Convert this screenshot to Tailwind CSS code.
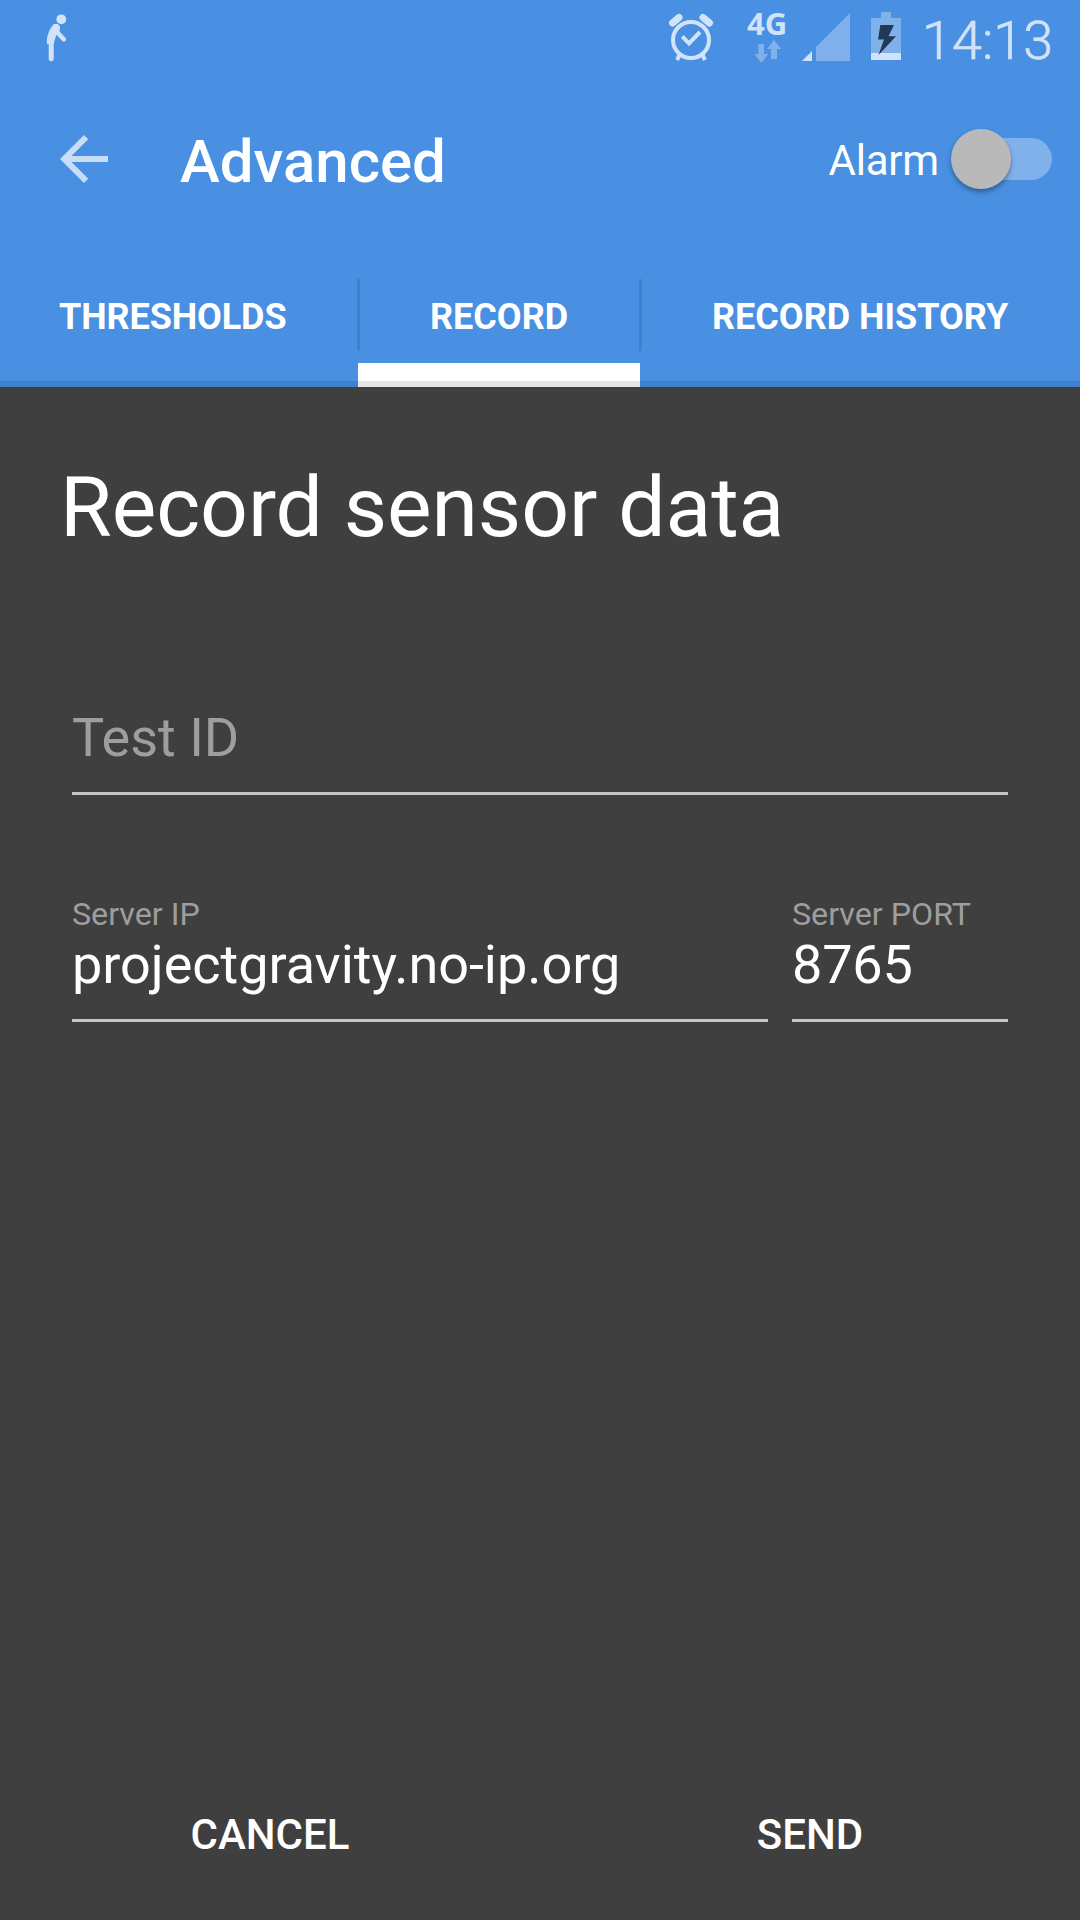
<!DOCTYPE html>
<html lang="en">
<head>
<meta charset="utf-8">
<title>Advanced</title>
<script src="https://cdn.jsdelivr.net/npm/@tailwindcss/browser@4"></script>
</head>
<body class="bg-[#3f3f3f] font-['Roboto',sans-serif] text-white">
<div class="flex h-[1920px] w-[1080px] flex-col overflow-hidden">
  <header class="flex h-[387px] flex-col bg-[#4990e2]">
    <!-- Status bar -->
    <div class="flex h-[72px] text-[#d1e3f8]">
      <svg class="ml-[42px] h-[72px] w-[30px]" viewBox="42 0 30 72" fill="none" stroke="currentColor" stroke-linecap="round" stroke-linejoin="round">
        <circle cx="61.3" cy="19.3" r="4.9" fill="currentColor" stroke="none"/>
        <path d="M47 44C46.7 36 49 29 54 24H58C60.5 26 60.5 28 59.5 31L56 36L53.5 44Z" fill="currentColor" stroke="none"/>
        <path d="M56.5 27.5Q50.5 33 49.5 41" stroke-width="5.5"/>
        <path d="M51.2 42V58.7" stroke-width="5"/>
        <path d="M57 32L63.8 39.3" stroke-width="4.6"/>
      </svg>
      <svg class="ml-[594px] h-[72px] w-[50px]" viewBox="666 0 50 72" fill="none" stroke="currentColor">
        <circle cx="691" cy="40" r="18" stroke-width="4"/>
        <path d="M682.3 36.5L689 43.3L700 32" stroke-width="4"/>
        <path d="M672.5 23L679 17.500M703 17.500L709.500 23" stroke-width="7" stroke-linecap="round"/>
        <path d="M680 54L677 60M702 54L705 60" stroke-width="4"/>
      </svg>
      <div class="ml-[30px] flex w-[40px] flex-col pt-[8px]">
        <span class="ml-px h-[32px] font-['Open_Sans','Noto_Sans',sans-serif] text-[31px] leading-[31px] font-bold">4G</span>
        <svg class="h-[24px] w-[40px] text-white/30" viewBox="746 40 40 24" fill="currentColor">
          <path d="M758.300 44H764V54H768.300L761.300 63L754.300 54H758.300Z"/>
          <path d="M771 59V49H767L774 40L781 49H777V59Z"/>
        </svg>
      </div>
      <svg class="ml-[16px] h-[72px] w-[48px]" viewBox="802 0 48 72">
        <path d="M816 61V47L850 13V61Z" fill="#ffffff4d"/>
        <path d="M802 61L812 51V61Z" fill="currentColor"/>
      </svg>
      <svg class="ml-[21px] h-[72px] w-[30px]" viewBox="871 0 30 72">
        <path d="M871 18H881V12H891V18H901V53H871Z" fill="#ffffff4d"/>
        <path d="M871 53H901V60H871Z" fill="currentColor"/>
        <path d="M880.300 25H894L888.500 36.300H896L878.500 55L884 39.500H878Z" fill="#213a56"/>
      </svg>
      <span class="ml-[21px] pt-[5px] text-[54px] leading-[72px] font-light [-webkit-text-stroke:0.6px_currentColor]">14:13</span>
    </div>
    <!-- Toolbar -->
    <div class="-mt-px mb-px flex h-[176px] items-center">
      <svg class="ml-[48px] h-[72px] w-[72px] text-white/70" viewBox="0 0 24 24" fill="currentColor"><path d="M20 11H7.830l5.590-5.590L12 4l-8 8 8 8 1.410-1.410L7.830 13H20z"/></svg>
      <h1 class="ml-[60px] pt-[5px] text-[60px] leading-[70px] font-medium">Advanced</h1>
      <div class="mr-[28px] ml-auto flex items-center">
        <span class="pt-[4px] text-[42px] leading-[50px] tracking-[-0.2px]">Alarm</span>
        <div class="ml-[12px] flex h-[60px] w-[101px] items-center">
          <div class="z-10 size-[60px] shrink-0 rounded-full bg-[#b9b9b9] shadow-[0_3px_5px_rgba(0,0,0,0.35)]"></div>
          <div class="-ml-[30px] h-[42px] grow rounded-r-full bg-white/30"></div>
        </div>
      </div>
    </div>
    <!-- Tabs -->
    <nav class="-ml-[12px] flex h-[139px] w-[1092px] text-[36px] leading-[42px] font-bold">
      <div class="flex w-[370px] flex-col">
        <div class="flex h-[133px] pt-[31px]"><span class="grow pt-[17px] pl-[71px] tracking-[-0.1px]">THRESHOLDS</span><i class="-mr-[1.500px] h-[72px] w-[3px] bg-black/10"></i></div>
        <div class="h-[6px] bg-black/10"></div>
      </div>
      <div class="flex w-[282px] flex-col">
        <div class="flex h-[115px] pt-[31px]"><span class="grow pt-[17px] pl-[72px]">RECORD</span><i class="-mr-[1.500px] h-[72px] w-[3px] bg-black/10"></i></div>
        <div class="h-[18px] bg-white"></div>
        <div class="h-[6px] bg-[#e5e5e5]"></div>
      </div>
      <div class="flex w-[440px] flex-col">
        <div class="h-[133px] pt-[48px] pl-[72px] whitespace-nowrap">RECORD HISTORY</div>
        <div class="h-[6px] bg-black/10"></div>
      </div>
    </nav>
  </header>
  <main class="flex grow flex-col">
    <h2 class="mt-[71px] ml-[60px] text-[84px] leading-[100px] tracking-[-0.05px]">Record sensor data</h2>
    <div class="mx-[72px] mt-[145px] h-[92px] border-b-[3px] border-[#c5c5c5] pt-[3px] text-[54px] leading-[64px] text-[#9e9e9e]">Test ID</div>
    <div class="mx-[72px] mt-[100px] flex gap-[24px]">
      <div class="w-[696px] border-b-[3px] border-[#c5c5c5] pb-[23px]">
        <div class="h-[38px] text-[32.200px] leading-[39px] text-[#9e9e9e]">Server IP</div>
        <div class="text-[54px] leading-[63px] tracking-[-0.03px]">projectgravity.no-ip.org</div>
      </div>
      <div class="w-[216px] border-b-[3px] border-[#c5c5c5] pb-[23px]">
        <div class="h-[38px] text-[32.200px] leading-[39px] text-[#9e9e9e]">Server PORT</div>
        <div class="text-[54px] leading-[63px] tracking-[-0.2px]">8765</div>
      </div>
    </div>
    <div class="mt-auto mb-[60px] grid grid-cols-2 text-center text-[42px] leading-[50px] font-medium">
      <span>CANCEL</span>
      <span>SEND</span>
    </div>
  </main>
</div>
</body>
</html>
